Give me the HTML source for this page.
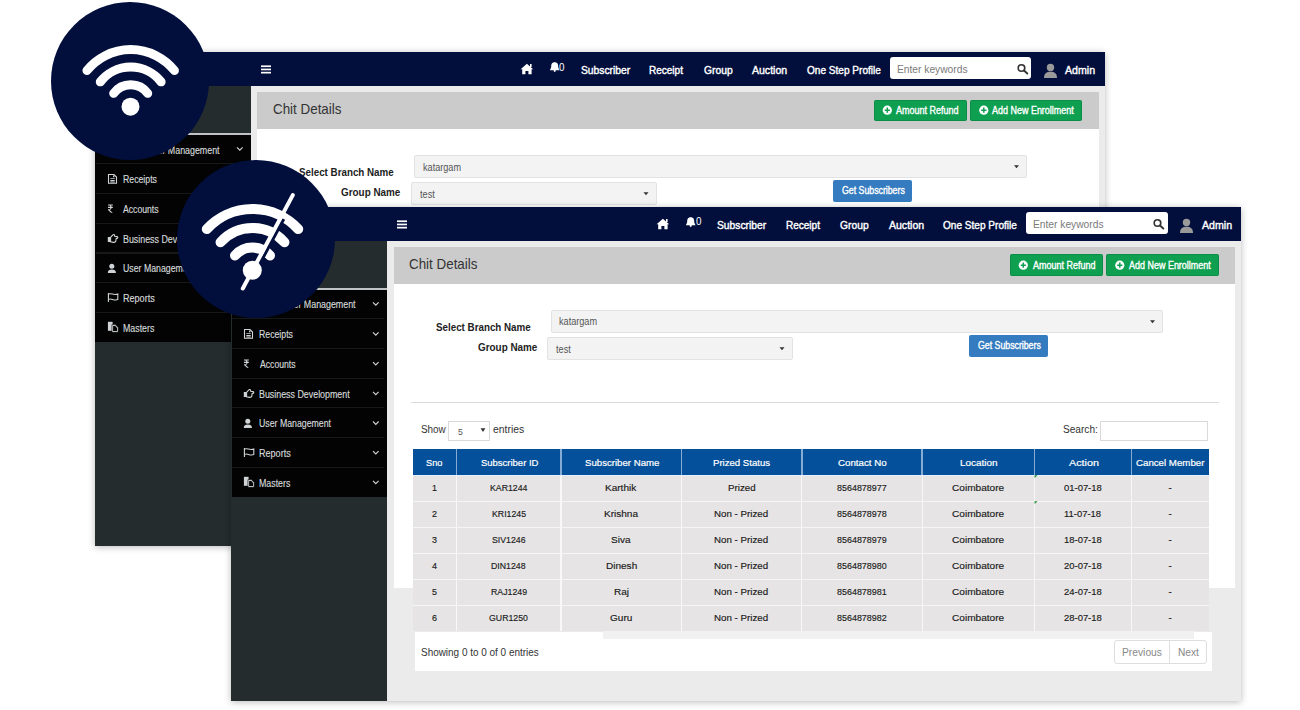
<!DOCTYPE html>
<html><head><meta charset="utf-8"><style>
html,body{margin:0;padding:0;background:#fff;width:1300px;height:710px;overflow:hidden;position:relative}
.shot{position:absolute;width:1010px;height:494px;overflow:hidden;box-shadow:0 1px 7px rgba(0,0,0,0.28)}
.r{position:absolute}
.t{position:absolute;white-space:pre;font-family:"Liberation Sans",sans-serif;transform-origin:0 0}
.ic{position:absolute;left:0;top:0}
.circ{position:absolute;left:0;top:0}
</style></head><body>
<div class="shot" style="left:94.6px;top:52.2px">
<div class="r" style="left:0.00px;top:0.00px;width:1010.00px;height:494.00px;background:#ebebeb"></div>
<div class="r" style="left:0.00px;top:33.50px;width:156.00px;height:460.50px;background:#252c2e"></div>
<div class="r" style="left:0.00px;top:81.00px;width:156.00px;height:1.60px;background:#bfc3c5"></div>
<div class="r" style="left:0.50px;top:82.60px;width:155.50px;height:207.60px;background:#030303"></div>
<div class="r" style="left:1.00px;top:111.20px;width:152.00px;height:1.10px;background:#161819"></div>
<div class="r" style="left:1.00px;top:140.90px;width:152.00px;height:1.10px;background:#161819"></div>
<div class="r" style="left:1.00px;top:170.60px;width:152.00px;height:1.10px;background:#161819"></div>
<div class="r" style="left:1.00px;top:200.30px;width:152.00px;height:1.10px;background:#161819"></div>
<div class="r" style="left:1.00px;top:230.00px;width:152.00px;height:1.10px;background:#161819"></div>
<div class="r" style="left:1.00px;top:259.70px;width:152.00px;height:1.10px;background:#161819"></div>
<div class="r" style="left:0.00px;top:0.00px;width:1010.00px;height:33.50px;background:#020f3d"></div>
<div class="r" style="left:162.70px;top:39.70px;width:841.30px;height:37.10px;background:#cbcbcb"></div>
<div class="r" style="left:162.70px;top:76.80px;width:841.30px;height:304.70px;background:#fff"></div>
<div class="r" style="left:779.00px;top:47.40px;width:93.00px;height:21.60px;background:#0e9f50;border-radius:2px;box-shadow:inset 0 0 0 1px rgba(0,60,20,0.18)"></div>
<div class="r" style="left:875.30px;top:47.40px;width:112.50px;height:21.60px;background:#0e9f50;border-radius:2px;box-shadow:inset 0 0 0 1px rgba(0,60,20,0.18)"></div>
<div class="r" style="left:319.80px;top:103.00px;width:612.20px;height:22.60px;background:#f3f3f3;border:1px solid #e2e2e2;box-sizing:border-box;border-radius:2px"></div>
<div class="r" style="left:316.00px;top:130.20px;width:246.30px;height:22.50px;background:#f3f3f3;border:1px solid #e2e2e2;box-sizing:border-box;border-radius:2px"></div>
<div class="r" style="left:738.40px;top:127.60px;width:79.10px;height:22.30px;background:#347bbf;border-radius:2px"></div>
<div class="r" style="left:795.20px;top:5.10px;width:141.70px;height:22.10px;background:#fff;border-radius:3px"></div>
<div class="r" style="left:180.40px;top:194.50px;width:807.20px;height:1.80px;background:#dcdcdc"></div>
<div class="r" style="left:217.20px;top:214.00px;width:42.20px;height:19.70px;background:#fff;border:1px solid #d9d9d9;box-sizing:border-box"></div>
<div class="r" style="left:869.10px;top:214.00px;width:107.70px;height:19.70px;background:#fff;border:1px solid #d9d9d9;box-sizing:border-box"></div>
<div class="r" style="left:182.00px;top:242.00px;width:796.00px;height:25.80px;background:#05509a"></div>
<div class="r" style="left:182.00px;top:267.80px;width:796.00px;height:156.20px;background:#e6e4e4"></div>
<div class="r" style="left:224.60px;top:242.00px;width:1.80px;height:25.80px;background:#86acd6"></div>
<div class="r" style="left:224.80px;top:267.60px;width:1.40px;height:156.40px;background:#f8f8f8"></div>
<div class="r" style="left:329.10px;top:242.00px;width:1.80px;height:25.80px;background:#86acd6"></div>
<div class="r" style="left:329.30px;top:267.60px;width:1.40px;height:156.40px;background:#f8f8f8"></div>
<div class="r" style="left:449.60px;top:242.00px;width:1.80px;height:25.80px;background:#86acd6"></div>
<div class="r" style="left:449.80px;top:267.60px;width:1.40px;height:156.40px;background:#f8f8f8"></div>
<div class="r" style="left:569.80px;top:242.00px;width:1.80px;height:25.80px;background:#86acd6"></div>
<div class="r" style="left:570.00px;top:267.60px;width:1.40px;height:156.40px;background:#f8f8f8"></div>
<div class="r" style="left:690.30px;top:242.00px;width:1.80px;height:25.80px;background:#86acd6"></div>
<div class="r" style="left:690.50px;top:267.60px;width:1.40px;height:156.40px;background:#f8f8f8"></div>
<div class="r" style="left:802.50px;top:242.00px;width:1.80px;height:25.80px;background:#86acd6"></div>
<div class="r" style="left:802.70px;top:267.60px;width:1.40px;height:156.40px;background:#f8f8f8"></div>
<div class="r" style="left:899.50px;top:242.00px;width:1.80px;height:25.80px;background:#86acd6"></div>
<div class="r" style="left:899.70px;top:267.60px;width:1.40px;height:156.40px;background:#f8f8f8"></div>
<div class="r" style="left:182.00px;top:267.80px;width:796.00px;height:1.20px;background:#e4f1fb"></div>
<div class="r" style="left:182.00px;top:293.80px;width:796.00px;height:1.20px;background:#f6f6f6"></div>
<div class="r" style="left:182.00px;top:319.80px;width:796.00px;height:1.20px;background:#f6f6f6"></div>
<div class="r" style="left:182.00px;top:345.80px;width:796.00px;height:1.20px;background:#f6f6f6"></div>
<div class="r" style="left:182.00px;top:371.80px;width:796.00px;height:1.20px;background:#f6f6f6"></div>
<div class="r" style="left:182.00px;top:397.80px;width:796.00px;height:1.20px;background:#f6f6f6"></div>
<div class="r" style="left:183.50px;top:424.80px;width:797.80px;height:39.40px;background:#fff"></div>
<div class="r" style="left:372.00px;top:424.20px;width:590.60px;height:7.60px;background:#f1f1f1"></div>
<div class="r" style="left:883.30px;top:433.40px;width:93.10px;height:23.30px;background:#fff;border:1px solid #dedede;border-radius:3px;box-sizing:border-box"></div>
<div class="r" style="left:938.20px;top:433.40px;width:1.00px;height:23.30px;background:#dedede"></div>

<svg class="ic" width="1010" height="494" viewBox="231 207 1010 494">
  <!-- hamburger -->
  <rect x="397" y="220.4" width="10" height="1.7" fill="#fff"/>
  <rect x="397" y="223.6" width="10" height="1.7" fill="#fff"/>
  <rect x="397" y="226.8" width="10" height="1.7" fill="#fff"/>
  <!-- home -->
  <path d="M656.6 224.3 L662.9 218.8 L669.2 224.3 L667.6 224.3 L667.6 229.2 L664.4 229.2 L664.4 226 L661.4 226 L661.4 229.2 L658.2 229.2 L658.2 224.3 Z" fill="#fff"/>
  <rect x="666" y="219" width="1.6" height="3" fill="#fff"/>
  <!-- bell -->
  <path d="M690.7 217.3 C693.5 217.3 694.2 219.5 694.2 221.5 C694.2 223.5 695.4 224.6 695.6 225.2 L685.8 225.2 C686 224.6 687.2 223.5 687.2 221.5 C687.2 219.5 687.9 217.3 690.7 217.3 Z" fill="#fff"/>
  <circle cx="690.7" cy="225.8" r="1.1" fill="#fff"/>
  <!-- search icon -->
  <circle cx="1157.5" cy="223" r="3.3" fill="none" stroke="#333" stroke-width="1.6"/>
  <line x1="1160" y1="225.5" x2="1163.3" y2="228.5" stroke="#333" stroke-width="1.9" stroke-linecap="round"/>
  <!-- user icon -->
  <circle cx="1186.5" cy="222.5" r="3.7" fill="#9a9a9a"/>
  <path d="M1180 233 C1180 228.5 1182.5 226.8 1186.5 226.8 C1190.5 226.8 1193 228.5 1193 233 Z" fill="#9a9a9a"/>
  <!-- plus circles -->
  <circle cx="1023.3" cy="265.2" r="4.6" fill="#fff"/>
  <path d="M1023.3 262.6 V267.8 M1020.7 265.2 H1025.9" stroke="#0e9f50" stroke-width="1.5"/>
  <circle cx="1119.8" cy="265.2" r="4.6" fill="#fff"/>
  <path d="M1119.8 262.6 V267.8 M1117.2 265.2 H1122.4" stroke="#0e9f50" stroke-width="1.5"/>
  <!-- select carets -->
  <path d="M1150 320.3 L1155 320.3 L1152.5 323.2 Z" fill="#333"/>
  <path d="M779.5 347.3 L784.5 347.3 L782 350.2 Z" fill="#333"/>
  <path d="M480.6 428.3 L485.4 428.3 L483 432 Z" fill="#333"/>
  <!-- sidebar chevrons -->
  <g fill="none" stroke="#cfd3d5" stroke-width="1.2">
    <path d="M373 302.4 L375.8 305.2 L378.6 302.4"/><path d="M373 332.4 L375.8 335.2 L378.6 332.4"/><path d="M373 362.09999999999997 L375.8 364.9 L378.6 362.09999999999997"/><path d="M373 391.8 L375.8 394.6 L378.6 391.8"/><path d="M373 421.5 L375.8 424.3 L378.6 421.5"/><path d="M373 451.2 L375.8 454 L378.6 451.2"/><path d="M373 480.9 L375.8 483.7 L378.6 480.9"/>
  </g>
  <!-- sidebar icons -->
  <g fill="none" stroke="#d0d4d6" stroke-width="1.1">
    <path d="M244.5 329.5 H250 L252.5 332 V338.3 H244.5 Z"/>
    <path d="M244.4 448 V457 M244.8 449 C247.5 447.6 249.5 450.8 253.8 449 V454.6 C249.5 456.2 247.5 452.8 244.8 454.4"/>
    <path d="M246.6 392.3 L248.6 390.2 C249.3 389.3 250.4 389.3 250.6 390.3 L250.7 391.2 L253 391.6 C254.1 391.9 254 393.2 253 393.4 L252.1 393.6 L251.8 396.2 C251.5 397.3 250.6 397.5 249.5 397.4 L246.6 396.7 Z"/>
  </g>
  <g fill="#d0d4d6">
    <path d="M246.3 333.2 H250.7 V334.1 H246.3 Z M246.3 335 H250.7 V335.9 H246.3 Z M246.3 336.6 H250.7 V337.4 H246.3 Z M249 330.5 H250.4 V332.2 H249 Z"/>
    <path d="M244 359.4 H248.8 V360.6 H246.6 C247.2 361 247.5 361.4 247.6 361.8 H248.8 V362.9 H247.6 C247.3 364.2 246.4 364.8 245.6 365 L248.8 367.8 H247 L244 365.1 V364.2 H245 C245.9 364.2 246.4 363.6 246.4 362.9 H244 V361.8 H246.3 C246.1 361.1 245.6 360.6 245 360.6 H244 Z"/>
    <circle cx="247.8" cy="421.3" r="2.5"/>
    <path d="M243.8 427.9 C243.8 425.2 245.2 424.4 247.8 424.4 C250.4 424.4 251.9 425.2 251.9 427.9 Z"/>
    <rect x="243.8" y="392" width="2.4" height="5" />
    <path d="M243.9 476.8 H248.6 V485.8 H243.9 Z"/>
    <path d="M247.9 479.6 H251.3 L254.2 482.5 V487.3 H247.9 Z" stroke="#030303" stroke-width="0.6"/>
    <path d="M249.1 481 V486.1 H253 V483 L251.2 481 Z" fill="#030303"/>
  </g>
  <!-- green corner marks -->
  <path d="M1034.6 475.2 L1037.5 475.2 L1034.6 478 Z" fill="#1a8a2a"/>
  <path d="M1034.6 501.2 L1037.5 501.2 L1034.6 504 Z" fill="#1a8a2a"/>
</svg>
<div class="t" style="left:486.08px;top:12.59px;font-size:11px;line-height:11px;font-weight:normal;color:#fff;transform:scaleX(0.9352);-webkit-text-stroke:0.4px #fff">Subscriber</div>
<div class="t" style="left:554.72px;top:12.59px;font-size:11px;line-height:11px;font-weight:normal;color:#fff;transform:scaleX(0.9102);-webkit-text-stroke:0.4px #fff">Receipt</div>
<div class="t" style="left:609.02px;top:12.59px;font-size:11px;line-height:11px;font-weight:normal;color:#fff;transform:scaleX(0.9355);-webkit-text-stroke:0.4px #fff">Group</div>
<div class="t" style="left:657.50px;top:12.59px;font-size:11px;line-height:11px;font-weight:normal;color:#fff;transform:scaleX(0.9564);-webkit-text-stroke:0.4px #fff">Auction</div>
<div class="t" style="left:712.03px;top:12.59px;font-size:11px;line-height:11px;font-weight:normal;color:#fff;transform:scaleX(0.9154);-webkit-text-stroke:0.4px #fff">One Step Profile</div>
<div class="t" style="left:970.90px;top:12.59px;font-size:11px;line-height:11px;font-weight:normal;color:#fff;transform:scaleX(0.9653);-webkit-text-stroke:0.4px #fff">Admin</div>
<div class="t" style="left:464.59px;top:10.44px;font-size:10px;line-height:10px;font-weight:normal;color:#fff;transform:scaleX(0.9800)">0</div>
<div class="t" style="left:802.00px;top:11.91px;font-size:10.5px;line-height:10.5px;font-weight:normal;color:#7a7a7a;transform:scaleX(0.9745)">Enter keywords</div>
<div class="t" style="left:177.97px;top:50.30px;font-size:14.3px;line-height:14.3px;font-weight:normal;color:#333;transform:scaleX(0.9362)">Chit Details</div>
<div class="t" style="left:801.70px;top:53.94px;font-size:10px;line-height:10px;font-weight:normal;color:#fff;transform:scaleX(0.8981);-webkit-text-stroke:0.35px #fff">Amount Refund</div>
<div class="t" style="left:897.80px;top:53.94px;font-size:10px;line-height:10px;font-weight:normal;color:#fff;transform:scaleX(0.8971);-webkit-text-stroke:0.35px #fff">Add New Enrollment</div>
<div class="t" style="left:204.55px;top:114.89px;font-size:11px;line-height:11px;font-weight:bold;color:#222;transform:scaleX(0.8902)">Select Branch Name</div>
<div class="t" style="left:246.89px;top:134.59px;font-size:11px;line-height:11px;font-weight:bold;color:#222;transform:scaleX(0.8992)">Group Name</div>
<div class="t" style="left:328.43px;top:110.33px;font-size:10px;line-height:10px;font-weight:normal;color:#555;transform:scaleX(0.9126)">katargam</div>
<div class="t" style="left:325.00px;top:137.54px;font-size:10px;line-height:10px;font-weight:normal;color:#555;transform:scaleX(0.9163)">test</div>
<div class="t" style="left:746.99px;top:134.04px;font-size:10px;line-height:10px;font-weight:normal;color:#fff;transform:scaleX(0.8757);-webkit-text-stroke:0.35px #fff">Get Subscribers</div>
<div class="t" style="left:189.59px;top:217.94px;font-size:10px;line-height:10px;font-weight:normal;color:#333;transform:scaleX(0.9869)">Show</div>
<div class="t" style="left:262.18px;top:217.94px;font-size:10px;line-height:10px;font-weight:normal;color:#333;transform:scaleX(1.0378)">entries</div>
<div class="t" style="left:831.58px;top:218.04px;font-size:10px;line-height:10px;font-weight:normal;color:#333;transform:scaleX(1.0106)">Search:</div>
<div class="t" style="left:226.73px;top:220.78px;font-size:9px;line-height:9px;font-weight:normal;color:#555;transform:scaleX(0.9634)">5</div>
<div class="t" style="left:195.31px;top:251.20px;font-size:9.8px;line-height:9.8px;font-weight:normal;color:#fff;transform:scaleX(0.9442);-webkit-text-stroke:0.2px #fff">Sno</div>
<div class="t" style="left:249.50px;top:251.20px;font-size:9.8px;line-height:9.8px;font-weight:normal;color:#fff;transform:scaleX(0.9673);-webkit-text-stroke:0.2px #fff">Subscriber ID</div>
<div class="t" style="left:353.50px;top:251.20px;font-size:9.8px;line-height:9.8px;font-weight:normal;color:#fff;transform:scaleX(0.9826);-webkit-text-stroke:0.2px #fff">Subscriber Name</div>
<div class="t" style="left:482.25px;top:251.20px;font-size:9.8px;line-height:9.8px;font-weight:normal;color:#fff;transform:scaleX(0.9788);-webkit-text-stroke:0.2px #fff">Prized Status</div>
<div class="t" style="left:606.74px;top:251.20px;font-size:9.8px;line-height:9.8px;font-weight:normal;color:#fff;transform:scaleX(0.9924);-webkit-text-stroke:0.2px #fff">Contact No</div>
<div class="t" style="left:728.53px;top:251.20px;font-size:9.8px;line-height:9.8px;font-weight:normal;color:#fff;transform:scaleX(1.0102);-webkit-text-stroke:0.2px #fff">Location</div>
<div class="t" style="left:838.00px;top:251.20px;font-size:9.8px;line-height:9.8px;font-weight:normal;color:#fff;transform:scaleX(1.0979);-webkit-text-stroke:0.2px #fff">Action</div>
<div class="t" style="left:904.75px;top:251.20px;font-size:9.8px;line-height:9.8px;font-weight:normal;color:#fff;transform:scaleX(0.9889);-webkit-text-stroke:0.2px #fff">Cancel Member</div>
<div class="t" style="left:201.16px;top:276.27px;font-size:9.6px;line-height:9.6px;font-weight:normal;color:#1a1a1a;transform:scaleX(0.9317);-webkit-text-stroke:0.15px #1a1a1a">1</div>
<div class="t" style="left:258.77px;top:276.27px;font-size:9.6px;line-height:9.6px;font-weight:normal;color:#1a1a1a;transform:scaleX(0.9126);-webkit-text-stroke:0.15px #1a1a1a">KAR1244</div>
<div class="t" style="left:374.17px;top:276.27px;font-size:9.6px;line-height:9.6px;font-weight:normal;color:#1a1a1a;transform:scaleX(1.0451);-webkit-text-stroke:0.15px #1a1a1a">Karthik</div>
<div class="t" style="left:496.67px;top:276.27px;font-size:9.6px;line-height:9.6px;font-weight:normal;color:#1a1a1a;transform:scaleX(1.0161);-webkit-text-stroke:0.15px #1a1a1a">Prized</div>
<div class="t" style="left:606.12px;top:276.27px;font-size:9.6px;line-height:9.6px;font-weight:normal;color:#1a1a1a;transform:scaleX(0.9317);-webkit-text-stroke:0.15px #1a1a1a">8564878977</div>
<div class="t" style="left:721.18px;top:276.27px;font-size:9.6px;line-height:9.6px;font-weight:normal;color:#1a1a1a;transform:scaleX(1.0516);-webkit-text-stroke:0.15px #1a1a1a">Coimbatore</div>
<div class="t" style="left:833.06px;top:276.27px;font-size:9.6px;line-height:9.6px;font-weight:normal;color:#1a1a1a;transform:scaleX(0.9831);-webkit-text-stroke:0.15px #1a1a1a">01-07-18</div>
<div class="t" style="left:937.62px;top:276.27px;font-size:9.6px;line-height:9.6px;font-weight:normal;color:#1a1a1a;transform:scaleX(1.0000);-webkit-text-stroke:0.15px #1a1a1a">-</div>
<div class="t" style="left:201.23px;top:302.27px;font-size:9.6px;line-height:9.6px;font-weight:normal;color:#1a1a1a;transform:scaleX(0.9317);-webkit-text-stroke:0.15px #1a1a1a">2</div>
<div class="t" style="left:260.54px;top:302.27px;font-size:9.6px;line-height:9.6px;font-weight:normal;color:#1a1a1a;transform:scaleX(0.9126);-webkit-text-stroke:0.15px #1a1a1a">KRI1245</div>
<div class="t" style="left:372.82px;top:302.27px;font-size:9.6px;line-height:9.6px;font-weight:normal;color:#1a1a1a;transform:scaleX(1.0451);-webkit-text-stroke:0.15px #1a1a1a">Krishna</div>
<div class="t" style="left:483.39px;top:302.27px;font-size:9.6px;line-height:9.6px;font-weight:normal;color:#1a1a1a;transform:scaleX(1.0161);-webkit-text-stroke:0.15px #1a1a1a">Non - Prized</div>
<div class="t" style="left:606.12px;top:302.27px;font-size:9.6px;line-height:9.6px;font-weight:normal;color:#1a1a1a;transform:scaleX(0.9317);-webkit-text-stroke:0.15px #1a1a1a">8564878978</div>
<div class="t" style="left:721.18px;top:302.27px;font-size:9.6px;line-height:9.6px;font-weight:normal;color:#1a1a1a;transform:scaleX(1.0516);-webkit-text-stroke:0.15px #1a1a1a">Coimbatore</div>
<div class="t" style="left:833.26px;top:302.27px;font-size:9.6px;line-height:9.6px;font-weight:normal;color:#1a1a1a;transform:scaleX(0.9831);-webkit-text-stroke:0.15px #1a1a1a">11-07-18</div>
<div class="t" style="left:937.62px;top:302.27px;font-size:9.6px;line-height:9.6px;font-weight:normal;color:#1a1a1a;transform:scaleX(1.0000);-webkit-text-stroke:0.15px #1a1a1a">-</div>
<div class="t" style="left:201.30px;top:328.27px;font-size:9.6px;line-height:9.6px;font-weight:normal;color:#1a1a1a;transform:scaleX(0.9317);-webkit-text-stroke:0.15px #1a1a1a">3</div>
<div class="t" style="left:260.99px;top:328.27px;font-size:9.6px;line-height:9.6px;font-weight:normal;color:#1a1a1a;transform:scaleX(0.9126);-webkit-text-stroke:0.15px #1a1a1a">SIV1246</div>
<div class="t" style="left:380.30px;top:328.27px;font-size:9.6px;line-height:9.6px;font-weight:normal;color:#1a1a1a;transform:scaleX(1.0451);-webkit-text-stroke:0.15px #1a1a1a">Siva</div>
<div class="t" style="left:483.39px;top:328.27px;font-size:9.6px;line-height:9.6px;font-weight:normal;color:#1a1a1a;transform:scaleX(1.0161);-webkit-text-stroke:0.15px #1a1a1a">Non - Prized</div>
<div class="t" style="left:606.12px;top:328.27px;font-size:9.6px;line-height:9.6px;font-weight:normal;color:#1a1a1a;transform:scaleX(0.9317);-webkit-text-stroke:0.15px #1a1a1a">8564878979</div>
<div class="t" style="left:721.18px;top:328.27px;font-size:9.6px;line-height:9.6px;font-weight:normal;color:#1a1a1a;transform:scaleX(1.0516);-webkit-text-stroke:0.15px #1a1a1a">Coimbatore</div>
<div class="t" style="left:832.91px;top:328.27px;font-size:9.6px;line-height:9.6px;font-weight:normal;color:#1a1a1a;transform:scaleX(0.9831);-webkit-text-stroke:0.15px #1a1a1a">18-07-18</div>
<div class="t" style="left:937.62px;top:328.27px;font-size:9.6px;line-height:9.6px;font-weight:normal;color:#1a1a1a;transform:scaleX(1.0000);-webkit-text-stroke:0.15px #1a1a1a">-</div>
<div class="t" style="left:201.30px;top:354.27px;font-size:9.6px;line-height:9.6px;font-weight:normal;color:#1a1a1a;transform:scaleX(0.9317);-webkit-text-stroke:0.15px #1a1a1a">4</div>
<div class="t" style="left:260.30px;top:354.27px;font-size:9.6px;line-height:9.6px;font-weight:normal;color:#1a1a1a;transform:scaleX(0.9126);-webkit-text-stroke:0.15px #1a1a1a">DIN1248</div>
<div class="t" style="left:374.52px;top:354.27px;font-size:9.6px;line-height:9.6px;font-weight:normal;color:#1a1a1a;transform:scaleX(1.0451);-webkit-text-stroke:0.15px #1a1a1a">Dinesh</div>
<div class="t" style="left:483.39px;top:354.27px;font-size:9.6px;line-height:9.6px;font-weight:normal;color:#1a1a1a;transform:scaleX(1.0161);-webkit-text-stroke:0.15px #1a1a1a">Non - Prized</div>
<div class="t" style="left:606.05px;top:354.27px;font-size:9.6px;line-height:9.6px;font-weight:normal;color:#1a1a1a;transform:scaleX(0.9317);-webkit-text-stroke:0.15px #1a1a1a">8564878980</div>
<div class="t" style="left:721.18px;top:354.27px;font-size:9.6px;line-height:9.6px;font-weight:normal;color:#1a1a1a;transform:scaleX(1.0516);-webkit-text-stroke:0.15px #1a1a1a">Coimbatore</div>
<div class="t" style="left:832.98px;top:354.27px;font-size:9.6px;line-height:9.6px;font-weight:normal;color:#1a1a1a;transform:scaleX(0.9831);-webkit-text-stroke:0.15px #1a1a1a">20-07-18</div>
<div class="t" style="left:937.62px;top:354.27px;font-size:9.6px;line-height:9.6px;font-weight:normal;color:#1a1a1a;transform:scaleX(1.0000);-webkit-text-stroke:0.15px #1a1a1a">-</div>
<div class="t" style="left:201.30px;top:380.27px;font-size:9.6px;line-height:9.6px;font-weight:normal;color:#1a1a1a;transform:scaleX(0.9317);-webkit-text-stroke:0.15px #1a1a1a">5</div>
<div class="t" style="left:259.57px;top:380.27px;font-size:9.6px;line-height:9.6px;font-weight:normal;color:#1a1a1a;transform:scaleX(0.9126);-webkit-text-stroke:0.15px #1a1a1a">RAJ1249</div>
<div class="t" style="left:382.66px;top:380.27px;font-size:9.6px;line-height:9.6px;font-weight:normal;color:#1a1a1a;transform:scaleX(1.0451);-webkit-text-stroke:0.15px #1a1a1a">Raj</div>
<div class="t" style="left:483.39px;top:380.27px;font-size:9.6px;line-height:9.6px;font-weight:normal;color:#1a1a1a;transform:scaleX(1.0161);-webkit-text-stroke:0.15px #1a1a1a">Non - Prized</div>
<div class="t" style="left:606.12px;top:380.27px;font-size:9.6px;line-height:9.6px;font-weight:normal;color:#1a1a1a;transform:scaleX(0.9317);-webkit-text-stroke:0.15px #1a1a1a">8564878981</div>
<div class="t" style="left:721.18px;top:380.27px;font-size:9.6px;line-height:9.6px;font-weight:normal;color:#1a1a1a;transform:scaleX(1.0516);-webkit-text-stroke:0.15px #1a1a1a">Coimbatore</div>
<div class="t" style="left:832.98px;top:380.27px;font-size:9.6px;line-height:9.6px;font-weight:normal;color:#1a1a1a;transform:scaleX(0.9831);-webkit-text-stroke:0.15px #1a1a1a">24-07-18</div>
<div class="t" style="left:937.62px;top:380.27px;font-size:9.6px;line-height:9.6px;font-weight:normal;color:#1a1a1a;transform:scaleX(1.0000);-webkit-text-stroke:0.15px #1a1a1a">-</div>
<div class="t" style="left:201.23px;top:406.27px;font-size:9.6px;line-height:9.6px;font-weight:normal;color:#1a1a1a;transform:scaleX(0.9317);-webkit-text-stroke:0.15px #1a1a1a">6</div>
<div class="t" style="left:258.18px;top:406.27px;font-size:9.6px;line-height:9.6px;font-weight:normal;color:#1a1a1a;transform:scaleX(0.9126);-webkit-text-stroke:0.15px #1a1a1a">GUR1250</div>
<div class="t" style="left:379.14px;top:406.27px;font-size:9.6px;line-height:9.6px;font-weight:normal;color:#1a1a1a;transform:scaleX(1.0451);-webkit-text-stroke:0.15px #1a1a1a">Guru</div>
<div class="t" style="left:483.39px;top:406.27px;font-size:9.6px;line-height:9.6px;font-weight:normal;color:#1a1a1a;transform:scaleX(1.0161);-webkit-text-stroke:0.15px #1a1a1a">Non - Prized</div>
<div class="t" style="left:606.12px;top:406.27px;font-size:9.6px;line-height:9.6px;font-weight:normal;color:#1a1a1a;transform:scaleX(0.9317);-webkit-text-stroke:0.15px #1a1a1a">8564878982</div>
<div class="t" style="left:721.18px;top:406.27px;font-size:9.6px;line-height:9.6px;font-weight:normal;color:#1a1a1a;transform:scaleX(1.0516);-webkit-text-stroke:0.15px #1a1a1a">Coimbatore</div>
<div class="t" style="left:832.98px;top:406.27px;font-size:9.6px;line-height:9.6px;font-weight:normal;color:#1a1a1a;transform:scaleX(0.9831);-webkit-text-stroke:0.15px #1a1a1a">28-07-18</div>
<div class="t" style="left:937.62px;top:406.27px;font-size:9.6px;line-height:9.6px;font-weight:normal;color:#1a1a1a;transform:scaleX(1.0000);-webkit-text-stroke:0.15px #1a1a1a">-</div>
<div class="t" style="left:189.69px;top:441.20px;font-size:10.4px;line-height:10.4px;font-weight:normal;color:#333;transform:scaleX(0.9568)">Showing 0 to 0 of 0 entries</div>
<div class="t" style="left:890.80px;top:441.33px;font-size:10px;line-height:10px;font-weight:normal;color:#888;transform:scaleX(1.0261)">Previous</div>
<div class="t" style="left:946.91px;top:441.33px;font-size:10px;line-height:10px;font-weight:normal;color:#888;transform:scaleX(1.0144)">Next</div>
<div class="t" style="left:28.39px;top:93.33px;font-size:10px;line-height:10px;font-weight:normal;color:#d5d8da;transform:scaleX(0.8865);-webkit-text-stroke:0.15px #d5d8da">Subscriber Management</div>
<div class="t" style="left:28.02px;top:123.04px;font-size:10px;line-height:10px;font-weight:normal;color:#d5d8da;transform:scaleX(0.8727);-webkit-text-stroke:0.15px #d5d8da">Receipts</div>
<div class="t" style="left:28.70px;top:152.74px;font-size:10px;line-height:10px;font-weight:normal;color:#d5d8da;transform:scaleX(0.8648);-webkit-text-stroke:0.15px #d5d8da">Accounts</div>
<div class="t" style="left:28.01px;top:182.54px;font-size:10px;line-height:10px;font-weight:normal;color:#d5d8da;transform:scaleX(0.8865);-webkit-text-stroke:0.15px #d5d8da">Business Development</div>
<div class="t" style="left:28.15px;top:212.24px;font-size:10px;line-height:10px;font-weight:normal;color:#d5d8da;transform:scaleX(0.8755);-webkit-text-stroke:0.15px #d5d8da">User Management</div>
<div class="t" style="left:27.99px;top:241.94px;font-size:10px;line-height:10px;font-weight:normal;color:#d5d8da;transform:scaleX(0.9050);-webkit-text-stroke:0.15px #d5d8da">Reports</div>
<div class="t" style="left:28.01px;top:271.54px;font-size:10px;line-height:10px;font-weight:normal;color:#d5d8da;transform:scaleX(0.8820);-webkit-text-stroke:0.15px #d5d8da">Masters</div>
</div>
<svg class="circ" width="1300" height="710" viewBox="0 0 1300 710">
  <circle cx="130" cy="81" r="79" fill="#020f3d"/>
  <path d="M86.96 70.51 A56.20 56.20 0 0 1 174.44 70.51" fill="none" stroke="#fff" stroke-width="9.00" stroke-linecap="round"/><path d="M100.29 81.87 A38.70 38.70 0 0 1 161.11 81.87" fill="none" stroke="#fff" stroke-width="9.00" stroke-linecap="round"/><path d="M113.69 93.31 A21.10 21.10 0 0 1 147.71 93.31" fill="none" stroke="#fff" stroke-width="9.00" stroke-linecap="round"/>
  <circle cx="130.5" cy="106.7" r="9" fill="#fff"/>
</svg>
<div class="shot" style="left:231px;top:207px">
<div class="r" style="left:0.00px;top:0.00px;width:1010.00px;height:494.00px;background:#ebebeb"></div>
<div class="r" style="left:0.00px;top:33.50px;width:156.00px;height:460.50px;background:#252c2e"></div>
<div class="r" style="left:0.00px;top:81.00px;width:156.00px;height:1.60px;background:#bfc3c5"></div>
<div class="r" style="left:0.50px;top:82.60px;width:155.50px;height:207.60px;background:#030303"></div>
<div class="r" style="left:1.00px;top:111.20px;width:152.00px;height:1.10px;background:#161819"></div>
<div class="r" style="left:1.00px;top:140.90px;width:152.00px;height:1.10px;background:#161819"></div>
<div class="r" style="left:1.00px;top:170.60px;width:152.00px;height:1.10px;background:#161819"></div>
<div class="r" style="left:1.00px;top:200.30px;width:152.00px;height:1.10px;background:#161819"></div>
<div class="r" style="left:1.00px;top:230.00px;width:152.00px;height:1.10px;background:#161819"></div>
<div class="r" style="left:1.00px;top:259.70px;width:152.00px;height:1.10px;background:#161819"></div>
<div class="r" style="left:0.00px;top:0.00px;width:1010.00px;height:33.50px;background:#020f3d"></div>
<div class="r" style="left:162.70px;top:39.70px;width:841.30px;height:37.10px;background:#cbcbcb"></div>
<div class="r" style="left:162.70px;top:76.80px;width:841.30px;height:304.70px;background:#fff"></div>
<div class="r" style="left:779.00px;top:47.40px;width:93.00px;height:21.60px;background:#0e9f50;border-radius:2px;box-shadow:inset 0 0 0 1px rgba(0,60,20,0.18)"></div>
<div class="r" style="left:875.30px;top:47.40px;width:112.50px;height:21.60px;background:#0e9f50;border-radius:2px;box-shadow:inset 0 0 0 1px rgba(0,60,20,0.18)"></div>
<div class="r" style="left:319.80px;top:103.00px;width:612.20px;height:22.60px;background:#f3f3f3;border:1px solid #e2e2e2;box-sizing:border-box;border-radius:2px"></div>
<div class="r" style="left:316.00px;top:130.20px;width:246.30px;height:22.50px;background:#f3f3f3;border:1px solid #e2e2e2;box-sizing:border-box;border-radius:2px"></div>
<div class="r" style="left:738.40px;top:127.60px;width:79.10px;height:22.30px;background:#347bbf;border-radius:2px"></div>
<div class="r" style="left:795.20px;top:5.10px;width:141.70px;height:22.10px;background:#fff;border-radius:3px"></div>
<div class="r" style="left:180.40px;top:194.50px;width:807.20px;height:1.80px;background:#dcdcdc"></div>
<div class="r" style="left:217.20px;top:214.00px;width:42.20px;height:19.70px;background:#fff;border:1px solid #d9d9d9;box-sizing:border-box"></div>
<div class="r" style="left:869.10px;top:214.00px;width:107.70px;height:19.70px;background:#fff;border:1px solid #d9d9d9;box-sizing:border-box"></div>
<div class="r" style="left:182.00px;top:242.00px;width:796.00px;height:25.80px;background:#05509a"></div>
<div class="r" style="left:182.00px;top:267.80px;width:796.00px;height:156.20px;background:#e6e4e4"></div>
<div class="r" style="left:224.60px;top:242.00px;width:1.80px;height:25.80px;background:#86acd6"></div>
<div class="r" style="left:224.80px;top:267.60px;width:1.40px;height:156.40px;background:#f8f8f8"></div>
<div class="r" style="left:329.10px;top:242.00px;width:1.80px;height:25.80px;background:#86acd6"></div>
<div class="r" style="left:329.30px;top:267.60px;width:1.40px;height:156.40px;background:#f8f8f8"></div>
<div class="r" style="left:449.60px;top:242.00px;width:1.80px;height:25.80px;background:#86acd6"></div>
<div class="r" style="left:449.80px;top:267.60px;width:1.40px;height:156.40px;background:#f8f8f8"></div>
<div class="r" style="left:569.80px;top:242.00px;width:1.80px;height:25.80px;background:#86acd6"></div>
<div class="r" style="left:570.00px;top:267.60px;width:1.40px;height:156.40px;background:#f8f8f8"></div>
<div class="r" style="left:690.30px;top:242.00px;width:1.80px;height:25.80px;background:#86acd6"></div>
<div class="r" style="left:690.50px;top:267.60px;width:1.40px;height:156.40px;background:#f8f8f8"></div>
<div class="r" style="left:802.50px;top:242.00px;width:1.80px;height:25.80px;background:#86acd6"></div>
<div class="r" style="left:802.70px;top:267.60px;width:1.40px;height:156.40px;background:#f8f8f8"></div>
<div class="r" style="left:899.50px;top:242.00px;width:1.80px;height:25.80px;background:#86acd6"></div>
<div class="r" style="left:899.70px;top:267.60px;width:1.40px;height:156.40px;background:#f8f8f8"></div>
<div class="r" style="left:182.00px;top:267.80px;width:796.00px;height:1.20px;background:#e4f1fb"></div>
<div class="r" style="left:182.00px;top:293.80px;width:796.00px;height:1.20px;background:#f6f6f6"></div>
<div class="r" style="left:182.00px;top:319.80px;width:796.00px;height:1.20px;background:#f6f6f6"></div>
<div class="r" style="left:182.00px;top:345.80px;width:796.00px;height:1.20px;background:#f6f6f6"></div>
<div class="r" style="left:182.00px;top:371.80px;width:796.00px;height:1.20px;background:#f6f6f6"></div>
<div class="r" style="left:182.00px;top:397.80px;width:796.00px;height:1.20px;background:#f6f6f6"></div>
<div class="r" style="left:183.50px;top:424.80px;width:797.80px;height:39.40px;background:#fff"></div>
<div class="r" style="left:372.00px;top:424.20px;width:590.60px;height:7.60px;background:#f1f1f1"></div>
<div class="r" style="left:883.30px;top:433.40px;width:93.10px;height:23.30px;background:#fff;border:1px solid #dedede;border-radius:3px;box-sizing:border-box"></div>
<div class="r" style="left:938.20px;top:433.40px;width:1.00px;height:23.30px;background:#dedede"></div>

<svg class="ic" width="1010" height="494" viewBox="231 207 1010 494">
  <!-- hamburger -->
  <rect x="397" y="220.4" width="10" height="1.7" fill="#fff"/>
  <rect x="397" y="223.6" width="10" height="1.7" fill="#fff"/>
  <rect x="397" y="226.8" width="10" height="1.7" fill="#fff"/>
  <!-- home -->
  <path d="M656.6 224.3 L662.9 218.8 L669.2 224.3 L667.6 224.3 L667.6 229.2 L664.4 229.2 L664.4 226 L661.4 226 L661.4 229.2 L658.2 229.2 L658.2 224.3 Z" fill="#fff"/>
  <rect x="666" y="219" width="1.6" height="3" fill="#fff"/>
  <!-- bell -->
  <path d="M690.7 217.3 C693.5 217.3 694.2 219.5 694.2 221.5 C694.2 223.5 695.4 224.6 695.6 225.2 L685.8 225.2 C686 224.6 687.2 223.5 687.2 221.5 C687.2 219.5 687.9 217.3 690.7 217.3 Z" fill="#fff"/>
  <circle cx="690.7" cy="225.8" r="1.1" fill="#fff"/>
  <!-- search icon -->
  <circle cx="1157.5" cy="223" r="3.3" fill="none" stroke="#333" stroke-width="1.6"/>
  <line x1="1160" y1="225.5" x2="1163.3" y2="228.5" stroke="#333" stroke-width="1.9" stroke-linecap="round"/>
  <!-- user icon -->
  <circle cx="1186.5" cy="222.5" r="3.7" fill="#9a9a9a"/>
  <path d="M1180 233 C1180 228.5 1182.5 226.8 1186.5 226.8 C1190.5 226.8 1193 228.5 1193 233 Z" fill="#9a9a9a"/>
  <!-- plus circles -->
  <circle cx="1023.3" cy="265.2" r="4.6" fill="#fff"/>
  <path d="M1023.3 262.6 V267.8 M1020.7 265.2 H1025.9" stroke="#0e9f50" stroke-width="1.5"/>
  <circle cx="1119.8" cy="265.2" r="4.6" fill="#fff"/>
  <path d="M1119.8 262.6 V267.8 M1117.2 265.2 H1122.4" stroke="#0e9f50" stroke-width="1.5"/>
  <!-- select carets -->
  <path d="M1150 320.3 L1155 320.3 L1152.5 323.2 Z" fill="#333"/>
  <path d="M779.5 347.3 L784.5 347.3 L782 350.2 Z" fill="#333"/>
  <path d="M480.6 428.3 L485.4 428.3 L483 432 Z" fill="#333"/>
  <!-- sidebar chevrons -->
  <g fill="none" stroke="#cfd3d5" stroke-width="1.2">
    <path d="M373 302.4 L375.8 305.2 L378.6 302.4"/><path d="M373 332.4 L375.8 335.2 L378.6 332.4"/><path d="M373 362.09999999999997 L375.8 364.9 L378.6 362.09999999999997"/><path d="M373 391.8 L375.8 394.6 L378.6 391.8"/><path d="M373 421.5 L375.8 424.3 L378.6 421.5"/><path d="M373 451.2 L375.8 454 L378.6 451.2"/><path d="M373 480.9 L375.8 483.7 L378.6 480.9"/>
  </g>
  <!-- sidebar icons -->
  <g fill="none" stroke="#d0d4d6" stroke-width="1.1">
    <path d="M244.5 329.5 H250 L252.5 332 V338.3 H244.5 Z"/>
    <path d="M244.4 448 V457 M244.8 449 C247.5 447.6 249.5 450.8 253.8 449 V454.6 C249.5 456.2 247.5 452.8 244.8 454.4"/>
    <path d="M246.6 392.3 L248.6 390.2 C249.3 389.3 250.4 389.3 250.6 390.3 L250.7 391.2 L253 391.6 C254.1 391.9 254 393.2 253 393.4 L252.1 393.6 L251.8 396.2 C251.5 397.3 250.6 397.5 249.5 397.4 L246.6 396.7 Z"/>
  </g>
  <g fill="#d0d4d6">
    <path d="M246.3 333.2 H250.7 V334.1 H246.3 Z M246.3 335 H250.7 V335.9 H246.3 Z M246.3 336.6 H250.7 V337.4 H246.3 Z M249 330.5 H250.4 V332.2 H249 Z"/>
    <path d="M244 359.4 H248.8 V360.6 H246.6 C247.2 361 247.5 361.4 247.6 361.8 H248.8 V362.9 H247.6 C247.3 364.2 246.4 364.8 245.6 365 L248.8 367.8 H247 L244 365.1 V364.2 H245 C245.9 364.2 246.4 363.6 246.4 362.9 H244 V361.8 H246.3 C246.1 361.1 245.6 360.6 245 360.6 H244 Z"/>
    <circle cx="247.8" cy="421.3" r="2.5"/>
    <path d="M243.8 427.9 C243.8 425.2 245.2 424.4 247.8 424.4 C250.4 424.4 251.9 425.2 251.9 427.9 Z"/>
    <rect x="243.8" y="392" width="2.4" height="5" />
    <path d="M243.9 476.8 H248.6 V485.8 H243.9 Z"/>
    <path d="M247.9 479.6 H251.3 L254.2 482.5 V487.3 H247.9 Z" stroke="#030303" stroke-width="0.6"/>
    <path d="M249.1 481 V486.1 H253 V483 L251.2 481 Z" fill="#030303"/>
  </g>
  <!-- green corner marks -->
  <path d="M1034.6 475.2 L1037.5 475.2 L1034.6 478 Z" fill="#1a8a2a"/>
  <path d="M1034.6 501.2 L1037.5 501.2 L1034.6 504 Z" fill="#1a8a2a"/>
</svg>
<div class="t" style="left:486.08px;top:12.59px;font-size:11px;line-height:11px;font-weight:normal;color:#fff;transform:scaleX(0.9352);-webkit-text-stroke:0.4px #fff">Subscriber</div>
<div class="t" style="left:554.72px;top:12.59px;font-size:11px;line-height:11px;font-weight:normal;color:#fff;transform:scaleX(0.9102);-webkit-text-stroke:0.4px #fff">Receipt</div>
<div class="t" style="left:609.02px;top:12.59px;font-size:11px;line-height:11px;font-weight:normal;color:#fff;transform:scaleX(0.9355);-webkit-text-stroke:0.4px #fff">Group</div>
<div class="t" style="left:657.50px;top:12.59px;font-size:11px;line-height:11px;font-weight:normal;color:#fff;transform:scaleX(0.9564);-webkit-text-stroke:0.4px #fff">Auction</div>
<div class="t" style="left:712.03px;top:12.59px;font-size:11px;line-height:11px;font-weight:normal;color:#fff;transform:scaleX(0.9154);-webkit-text-stroke:0.4px #fff">One Step Profile</div>
<div class="t" style="left:970.90px;top:12.59px;font-size:11px;line-height:11px;font-weight:normal;color:#fff;transform:scaleX(0.9653);-webkit-text-stroke:0.4px #fff">Admin</div>
<div class="t" style="left:464.59px;top:10.44px;font-size:10px;line-height:10px;font-weight:normal;color:#fff;transform:scaleX(0.9800)">0</div>
<div class="t" style="left:802.00px;top:11.91px;font-size:10.5px;line-height:10.5px;font-weight:normal;color:#7a7a7a;transform:scaleX(0.9745)">Enter keywords</div>
<div class="t" style="left:177.97px;top:50.30px;font-size:14.3px;line-height:14.3px;font-weight:normal;color:#333;transform:scaleX(0.9362)">Chit Details</div>
<div class="t" style="left:801.70px;top:53.94px;font-size:10px;line-height:10px;font-weight:normal;color:#fff;transform:scaleX(0.8981);-webkit-text-stroke:0.35px #fff">Amount Refund</div>
<div class="t" style="left:897.80px;top:53.94px;font-size:10px;line-height:10px;font-weight:normal;color:#fff;transform:scaleX(0.8971);-webkit-text-stroke:0.35px #fff">Add New Enrollment</div>
<div class="t" style="left:204.55px;top:114.89px;font-size:11px;line-height:11px;font-weight:bold;color:#222;transform:scaleX(0.8902)">Select Branch Name</div>
<div class="t" style="left:246.89px;top:134.59px;font-size:11px;line-height:11px;font-weight:bold;color:#222;transform:scaleX(0.8992)">Group Name</div>
<div class="t" style="left:328.43px;top:110.33px;font-size:10px;line-height:10px;font-weight:normal;color:#555;transform:scaleX(0.9126)">katargam</div>
<div class="t" style="left:325.00px;top:137.54px;font-size:10px;line-height:10px;font-weight:normal;color:#555;transform:scaleX(0.9163)">test</div>
<div class="t" style="left:746.99px;top:134.04px;font-size:10px;line-height:10px;font-weight:normal;color:#fff;transform:scaleX(0.8757);-webkit-text-stroke:0.35px #fff">Get Subscribers</div>
<div class="t" style="left:189.59px;top:217.94px;font-size:10px;line-height:10px;font-weight:normal;color:#333;transform:scaleX(0.9869)">Show</div>
<div class="t" style="left:262.18px;top:217.94px;font-size:10px;line-height:10px;font-weight:normal;color:#333;transform:scaleX(1.0378)">entries</div>
<div class="t" style="left:831.58px;top:218.04px;font-size:10px;line-height:10px;font-weight:normal;color:#333;transform:scaleX(1.0106)">Search:</div>
<div class="t" style="left:226.73px;top:220.78px;font-size:9px;line-height:9px;font-weight:normal;color:#555;transform:scaleX(0.9634)">5</div>
<div class="t" style="left:195.31px;top:251.20px;font-size:9.8px;line-height:9.8px;font-weight:normal;color:#fff;transform:scaleX(0.9442);-webkit-text-stroke:0.2px #fff">Sno</div>
<div class="t" style="left:249.50px;top:251.20px;font-size:9.8px;line-height:9.8px;font-weight:normal;color:#fff;transform:scaleX(0.9673);-webkit-text-stroke:0.2px #fff">Subscriber ID</div>
<div class="t" style="left:353.50px;top:251.20px;font-size:9.8px;line-height:9.8px;font-weight:normal;color:#fff;transform:scaleX(0.9826);-webkit-text-stroke:0.2px #fff">Subscriber Name</div>
<div class="t" style="left:482.25px;top:251.20px;font-size:9.8px;line-height:9.8px;font-weight:normal;color:#fff;transform:scaleX(0.9788);-webkit-text-stroke:0.2px #fff">Prized Status</div>
<div class="t" style="left:606.74px;top:251.20px;font-size:9.8px;line-height:9.8px;font-weight:normal;color:#fff;transform:scaleX(0.9924);-webkit-text-stroke:0.2px #fff">Contact No</div>
<div class="t" style="left:728.53px;top:251.20px;font-size:9.8px;line-height:9.8px;font-weight:normal;color:#fff;transform:scaleX(1.0102);-webkit-text-stroke:0.2px #fff">Location</div>
<div class="t" style="left:838.00px;top:251.20px;font-size:9.8px;line-height:9.8px;font-weight:normal;color:#fff;transform:scaleX(1.0979);-webkit-text-stroke:0.2px #fff">Action</div>
<div class="t" style="left:904.75px;top:251.20px;font-size:9.8px;line-height:9.8px;font-weight:normal;color:#fff;transform:scaleX(0.9889);-webkit-text-stroke:0.2px #fff">Cancel Member</div>
<div class="t" style="left:201.16px;top:276.27px;font-size:9.6px;line-height:9.6px;font-weight:normal;color:#1a1a1a;transform:scaleX(0.9317);-webkit-text-stroke:0.15px #1a1a1a">1</div>
<div class="t" style="left:258.77px;top:276.27px;font-size:9.6px;line-height:9.6px;font-weight:normal;color:#1a1a1a;transform:scaleX(0.9126);-webkit-text-stroke:0.15px #1a1a1a">KAR1244</div>
<div class="t" style="left:374.17px;top:276.27px;font-size:9.6px;line-height:9.6px;font-weight:normal;color:#1a1a1a;transform:scaleX(1.0451);-webkit-text-stroke:0.15px #1a1a1a">Karthik</div>
<div class="t" style="left:496.67px;top:276.27px;font-size:9.6px;line-height:9.6px;font-weight:normal;color:#1a1a1a;transform:scaleX(1.0161);-webkit-text-stroke:0.15px #1a1a1a">Prized</div>
<div class="t" style="left:606.12px;top:276.27px;font-size:9.6px;line-height:9.6px;font-weight:normal;color:#1a1a1a;transform:scaleX(0.9317);-webkit-text-stroke:0.15px #1a1a1a">8564878977</div>
<div class="t" style="left:721.18px;top:276.27px;font-size:9.6px;line-height:9.6px;font-weight:normal;color:#1a1a1a;transform:scaleX(1.0516);-webkit-text-stroke:0.15px #1a1a1a">Coimbatore</div>
<div class="t" style="left:833.06px;top:276.27px;font-size:9.6px;line-height:9.6px;font-weight:normal;color:#1a1a1a;transform:scaleX(0.9831);-webkit-text-stroke:0.15px #1a1a1a">01-07-18</div>
<div class="t" style="left:937.62px;top:276.27px;font-size:9.6px;line-height:9.6px;font-weight:normal;color:#1a1a1a;transform:scaleX(1.0000);-webkit-text-stroke:0.15px #1a1a1a">-</div>
<div class="t" style="left:201.23px;top:302.27px;font-size:9.6px;line-height:9.6px;font-weight:normal;color:#1a1a1a;transform:scaleX(0.9317);-webkit-text-stroke:0.15px #1a1a1a">2</div>
<div class="t" style="left:260.54px;top:302.27px;font-size:9.6px;line-height:9.6px;font-weight:normal;color:#1a1a1a;transform:scaleX(0.9126);-webkit-text-stroke:0.15px #1a1a1a">KRI1245</div>
<div class="t" style="left:372.82px;top:302.27px;font-size:9.6px;line-height:9.6px;font-weight:normal;color:#1a1a1a;transform:scaleX(1.0451);-webkit-text-stroke:0.15px #1a1a1a">Krishna</div>
<div class="t" style="left:483.39px;top:302.27px;font-size:9.6px;line-height:9.6px;font-weight:normal;color:#1a1a1a;transform:scaleX(1.0161);-webkit-text-stroke:0.15px #1a1a1a">Non - Prized</div>
<div class="t" style="left:606.12px;top:302.27px;font-size:9.6px;line-height:9.6px;font-weight:normal;color:#1a1a1a;transform:scaleX(0.9317);-webkit-text-stroke:0.15px #1a1a1a">8564878978</div>
<div class="t" style="left:721.18px;top:302.27px;font-size:9.6px;line-height:9.6px;font-weight:normal;color:#1a1a1a;transform:scaleX(1.0516);-webkit-text-stroke:0.15px #1a1a1a">Coimbatore</div>
<div class="t" style="left:833.26px;top:302.27px;font-size:9.6px;line-height:9.6px;font-weight:normal;color:#1a1a1a;transform:scaleX(0.9831);-webkit-text-stroke:0.15px #1a1a1a">11-07-18</div>
<div class="t" style="left:937.62px;top:302.27px;font-size:9.6px;line-height:9.6px;font-weight:normal;color:#1a1a1a;transform:scaleX(1.0000);-webkit-text-stroke:0.15px #1a1a1a">-</div>
<div class="t" style="left:201.30px;top:328.27px;font-size:9.6px;line-height:9.6px;font-weight:normal;color:#1a1a1a;transform:scaleX(0.9317);-webkit-text-stroke:0.15px #1a1a1a">3</div>
<div class="t" style="left:260.99px;top:328.27px;font-size:9.6px;line-height:9.6px;font-weight:normal;color:#1a1a1a;transform:scaleX(0.9126);-webkit-text-stroke:0.15px #1a1a1a">SIV1246</div>
<div class="t" style="left:380.30px;top:328.27px;font-size:9.6px;line-height:9.6px;font-weight:normal;color:#1a1a1a;transform:scaleX(1.0451);-webkit-text-stroke:0.15px #1a1a1a">Siva</div>
<div class="t" style="left:483.39px;top:328.27px;font-size:9.6px;line-height:9.6px;font-weight:normal;color:#1a1a1a;transform:scaleX(1.0161);-webkit-text-stroke:0.15px #1a1a1a">Non - Prized</div>
<div class="t" style="left:606.12px;top:328.27px;font-size:9.6px;line-height:9.6px;font-weight:normal;color:#1a1a1a;transform:scaleX(0.9317);-webkit-text-stroke:0.15px #1a1a1a">8564878979</div>
<div class="t" style="left:721.18px;top:328.27px;font-size:9.6px;line-height:9.6px;font-weight:normal;color:#1a1a1a;transform:scaleX(1.0516);-webkit-text-stroke:0.15px #1a1a1a">Coimbatore</div>
<div class="t" style="left:832.91px;top:328.27px;font-size:9.6px;line-height:9.6px;font-weight:normal;color:#1a1a1a;transform:scaleX(0.9831);-webkit-text-stroke:0.15px #1a1a1a">18-07-18</div>
<div class="t" style="left:937.62px;top:328.27px;font-size:9.6px;line-height:9.6px;font-weight:normal;color:#1a1a1a;transform:scaleX(1.0000);-webkit-text-stroke:0.15px #1a1a1a">-</div>
<div class="t" style="left:201.30px;top:354.27px;font-size:9.6px;line-height:9.6px;font-weight:normal;color:#1a1a1a;transform:scaleX(0.9317);-webkit-text-stroke:0.15px #1a1a1a">4</div>
<div class="t" style="left:260.30px;top:354.27px;font-size:9.6px;line-height:9.6px;font-weight:normal;color:#1a1a1a;transform:scaleX(0.9126);-webkit-text-stroke:0.15px #1a1a1a">DIN1248</div>
<div class="t" style="left:374.52px;top:354.27px;font-size:9.6px;line-height:9.6px;font-weight:normal;color:#1a1a1a;transform:scaleX(1.0451);-webkit-text-stroke:0.15px #1a1a1a">Dinesh</div>
<div class="t" style="left:483.39px;top:354.27px;font-size:9.6px;line-height:9.6px;font-weight:normal;color:#1a1a1a;transform:scaleX(1.0161);-webkit-text-stroke:0.15px #1a1a1a">Non - Prized</div>
<div class="t" style="left:606.05px;top:354.27px;font-size:9.6px;line-height:9.6px;font-weight:normal;color:#1a1a1a;transform:scaleX(0.9317);-webkit-text-stroke:0.15px #1a1a1a">8564878980</div>
<div class="t" style="left:721.18px;top:354.27px;font-size:9.6px;line-height:9.6px;font-weight:normal;color:#1a1a1a;transform:scaleX(1.0516);-webkit-text-stroke:0.15px #1a1a1a">Coimbatore</div>
<div class="t" style="left:832.98px;top:354.27px;font-size:9.6px;line-height:9.6px;font-weight:normal;color:#1a1a1a;transform:scaleX(0.9831);-webkit-text-stroke:0.15px #1a1a1a">20-07-18</div>
<div class="t" style="left:937.62px;top:354.27px;font-size:9.6px;line-height:9.6px;font-weight:normal;color:#1a1a1a;transform:scaleX(1.0000);-webkit-text-stroke:0.15px #1a1a1a">-</div>
<div class="t" style="left:201.30px;top:380.27px;font-size:9.6px;line-height:9.6px;font-weight:normal;color:#1a1a1a;transform:scaleX(0.9317);-webkit-text-stroke:0.15px #1a1a1a">5</div>
<div class="t" style="left:259.57px;top:380.27px;font-size:9.6px;line-height:9.6px;font-weight:normal;color:#1a1a1a;transform:scaleX(0.9126);-webkit-text-stroke:0.15px #1a1a1a">RAJ1249</div>
<div class="t" style="left:382.66px;top:380.27px;font-size:9.6px;line-height:9.6px;font-weight:normal;color:#1a1a1a;transform:scaleX(1.0451);-webkit-text-stroke:0.15px #1a1a1a">Raj</div>
<div class="t" style="left:483.39px;top:380.27px;font-size:9.6px;line-height:9.6px;font-weight:normal;color:#1a1a1a;transform:scaleX(1.0161);-webkit-text-stroke:0.15px #1a1a1a">Non - Prized</div>
<div class="t" style="left:606.12px;top:380.27px;font-size:9.6px;line-height:9.6px;font-weight:normal;color:#1a1a1a;transform:scaleX(0.9317);-webkit-text-stroke:0.15px #1a1a1a">8564878981</div>
<div class="t" style="left:721.18px;top:380.27px;font-size:9.6px;line-height:9.6px;font-weight:normal;color:#1a1a1a;transform:scaleX(1.0516);-webkit-text-stroke:0.15px #1a1a1a">Coimbatore</div>
<div class="t" style="left:832.98px;top:380.27px;font-size:9.6px;line-height:9.6px;font-weight:normal;color:#1a1a1a;transform:scaleX(0.9831);-webkit-text-stroke:0.15px #1a1a1a">24-07-18</div>
<div class="t" style="left:937.62px;top:380.27px;font-size:9.6px;line-height:9.6px;font-weight:normal;color:#1a1a1a;transform:scaleX(1.0000);-webkit-text-stroke:0.15px #1a1a1a">-</div>
<div class="t" style="left:201.23px;top:406.27px;font-size:9.6px;line-height:9.6px;font-weight:normal;color:#1a1a1a;transform:scaleX(0.9317);-webkit-text-stroke:0.15px #1a1a1a">6</div>
<div class="t" style="left:258.18px;top:406.27px;font-size:9.6px;line-height:9.6px;font-weight:normal;color:#1a1a1a;transform:scaleX(0.9126);-webkit-text-stroke:0.15px #1a1a1a">GUR1250</div>
<div class="t" style="left:379.14px;top:406.27px;font-size:9.6px;line-height:9.6px;font-weight:normal;color:#1a1a1a;transform:scaleX(1.0451);-webkit-text-stroke:0.15px #1a1a1a">Guru</div>
<div class="t" style="left:483.39px;top:406.27px;font-size:9.6px;line-height:9.6px;font-weight:normal;color:#1a1a1a;transform:scaleX(1.0161);-webkit-text-stroke:0.15px #1a1a1a">Non - Prized</div>
<div class="t" style="left:606.12px;top:406.27px;font-size:9.6px;line-height:9.6px;font-weight:normal;color:#1a1a1a;transform:scaleX(0.9317);-webkit-text-stroke:0.15px #1a1a1a">8564878982</div>
<div class="t" style="left:721.18px;top:406.27px;font-size:9.6px;line-height:9.6px;font-weight:normal;color:#1a1a1a;transform:scaleX(1.0516);-webkit-text-stroke:0.15px #1a1a1a">Coimbatore</div>
<div class="t" style="left:832.98px;top:406.27px;font-size:9.6px;line-height:9.6px;font-weight:normal;color:#1a1a1a;transform:scaleX(0.9831);-webkit-text-stroke:0.15px #1a1a1a">28-07-18</div>
<div class="t" style="left:937.62px;top:406.27px;font-size:9.6px;line-height:9.6px;font-weight:normal;color:#1a1a1a;transform:scaleX(1.0000);-webkit-text-stroke:0.15px #1a1a1a">-</div>
<div class="t" style="left:189.69px;top:441.20px;font-size:10.4px;line-height:10.4px;font-weight:normal;color:#333;transform:scaleX(0.9568)">Showing 0 to 0 of 0 entries</div>
<div class="t" style="left:890.80px;top:441.33px;font-size:10px;line-height:10px;font-weight:normal;color:#888;transform:scaleX(1.0261)">Previous</div>
<div class="t" style="left:946.91px;top:441.33px;font-size:10px;line-height:10px;font-weight:normal;color:#888;transform:scaleX(1.0144)">Next</div>
<div class="t" style="left:28.39px;top:93.33px;font-size:10px;line-height:10px;font-weight:normal;color:#d5d8da;transform:scaleX(0.8865);-webkit-text-stroke:0.15px #d5d8da">Subscriber Management</div>
<div class="t" style="left:28.02px;top:123.04px;font-size:10px;line-height:10px;font-weight:normal;color:#d5d8da;transform:scaleX(0.8727);-webkit-text-stroke:0.15px #d5d8da">Receipts</div>
<div class="t" style="left:28.70px;top:152.74px;font-size:10px;line-height:10px;font-weight:normal;color:#d5d8da;transform:scaleX(0.8648);-webkit-text-stroke:0.15px #d5d8da">Accounts</div>
<div class="t" style="left:28.01px;top:182.54px;font-size:10px;line-height:10px;font-weight:normal;color:#d5d8da;transform:scaleX(0.8865);-webkit-text-stroke:0.15px #d5d8da">Business Development</div>
<div class="t" style="left:28.15px;top:212.24px;font-size:10px;line-height:10px;font-weight:normal;color:#d5d8da;transform:scaleX(0.8755);-webkit-text-stroke:0.15px #d5d8da">User Management</div>
<div class="t" style="left:27.99px;top:241.94px;font-size:10px;line-height:10px;font-weight:normal;color:#d5d8da;transform:scaleX(0.9050);-webkit-text-stroke:0.15px #d5d8da">Reports</div>
<div class="t" style="left:28.01px;top:271.54px;font-size:10px;line-height:10px;font-weight:normal;color:#d5d8da;transform:scaleX(0.8820);-webkit-text-stroke:0.15px #d5d8da">Masters</div>
</div>
<svg class="circ" width="1300" height="710" viewBox="0 0 1300 710">
  <circle cx="256" cy="239" r="79" fill="#020f3d"/>
  <path d="M206.79 229.11 A62.00 62.00 0 0 1 298.21 229.11" fill="none" stroke="#fff" stroke-width="10.00" stroke-linecap="round"/><path d="M220.54 242.23 A43.00 43.00 0 0 1 284.46 242.23" fill="none" stroke="#fff" stroke-width="10.00" stroke-linecap="round"/><path d="M234.97 255.49 A23.40 23.40 0 0 1 270.03 255.49" fill="none" stroke="#fff" stroke-width="10.00" stroke-linecap="round"/>
  <line x1="283.68" y1="219.02" x2="245.68" y2="290.02" stroke="#020f3d" stroke-width="3.2" stroke-linecap="butt"/>
  <circle cx="252.3" cy="270.3" r="9.5" fill="#fff"/>
  <line x1="292.8" y1="195.1" x2="242.8" y2="288.5" stroke="#fff" stroke-width="4" stroke-linecap="round"/>
</svg>
</body></html>
